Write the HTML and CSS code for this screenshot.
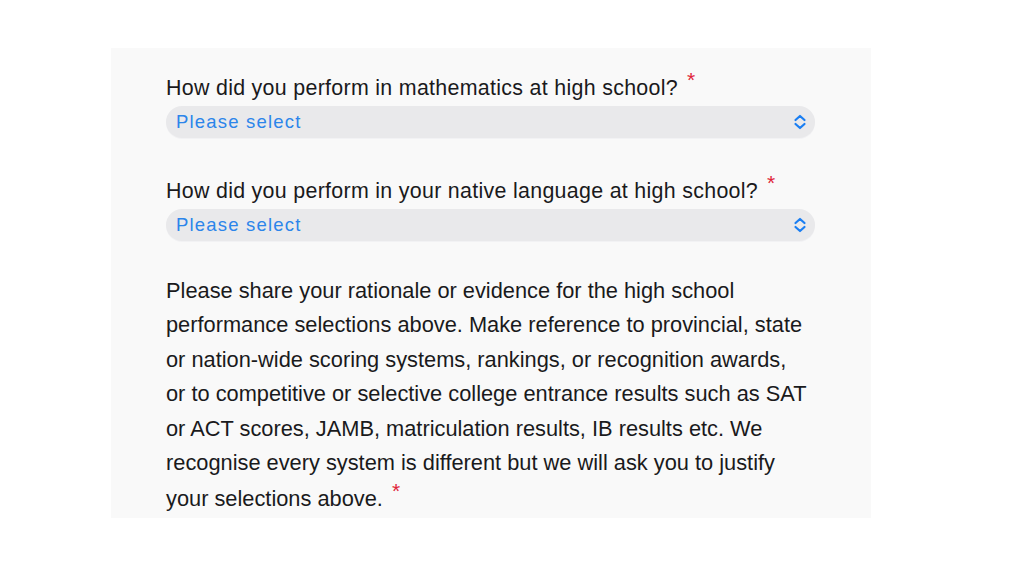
FILE: index.html
```html
<!DOCTYPE html>
<html>
<head>
<meta charset="utf-8">
<link rel="stylesheet" href="styles.css">
</head>
<body>
<div class="panel">
  <div class="field">
    <label class="label">How did you perform in mathematics at high school?<span class="req">*</span></label>
    <div class="select">
      <span class="placeholder">Please select</span>
      <svg class="chev" width="14" height="16" viewBox="0 0 14 16"><path d="M2.5 6 L7 2 L11.5 6 M2.5 10 L7 14 L11.5 10" fill="none" stroke="#1a7ef2" stroke-width="2.2" stroke-linecap="round" stroke-linejoin="round"/></svg>
    </div>
  </div>
  <div class="field">
    <label class="label">How did you perform in your native language at high school?<span class="req">*</span></label>
    <div class="select">
      <span class="placeholder">Please select</span>
      <svg class="chev" width="14" height="16" viewBox="0 0 14 16"><path d="M2.5 6 L7 2 L11.5 6 M2.5 10 L7 14 L11.5 10" fill="none" stroke="#1a7ef2" stroke-width="2.2" stroke-linecap="round" stroke-linejoin="round"/></svg>
    </div>
  </div>
  <p class="para">Please share your rationale or evidence for the high school<br>performance selections above. Make reference to provincial, state<br>or nation-wide scoring systems, rankings, or recognition awards,<br>or to competitive or selective college entrance results such as SAT<br>or ACT scores, JAMB, matriculation results, IB results etc. We<br>recognise every system is different but we will ask you to justify<br>your selections above.<span class="req">*</span></p>
</div>
</body>
</html>
```

FILE: styles.css
```css
html, body {
  margin: 0;
  padding: 0;
  background: #ffffff;
}
body {
  font-family: "Liberation Sans", Arial, sans-serif;
  color: #1a1a1c;
}
.panel {
  margin-left: 111px;
  margin-top: 48px;
  width: 649px;
  height: 470px;
  padding: 0 56px 0 55px;
  background: #f9f9f9;
  display: flex;
  flex-direction: column;
  overflow: hidden;
}
.field {
  display: flex;
  flex-direction: column;
}
.field:first-child {
  padding-top: 26px;
}
.field + .field {
  margin-top: 39px;
}
.label {
  display: block;
  font-size: 21.4px;
  letter-spacing: 0.3px;
  line-height: 24px;
  height: 30px;
  padding-top: 2px;
  white-space: nowrap;
}
.req {
  color: #e0243a;
  font-size: 21px;
  line-height: 1;
  letter-spacing: 0;
  margin-left: 9px;
  position: relative;
  top: -8px;
}
.select {
  height: 32px;
  border-radius: 16px;
  background: #e9e9eb;
  box-shadow: 0 1px 0 #f2f2f4;
  display: flex;
  align-items: center;
  justify-content: space-between;
  padding: 0 8px 0 10px;
}
.placeholder {
  color: #2c85ea;
  font-size: 18.5px;
  letter-spacing: 1.2px;
}
.chev {
  display: block;
}
.para {
  margin: 33px 0 0 0;
  font-size: 21.8px;
  line-height: 34.4px;
  white-space: nowrap;
}
.para .req {
  margin-left: 9px;
  position: static;
  vertical-align: 8px;
}
```
